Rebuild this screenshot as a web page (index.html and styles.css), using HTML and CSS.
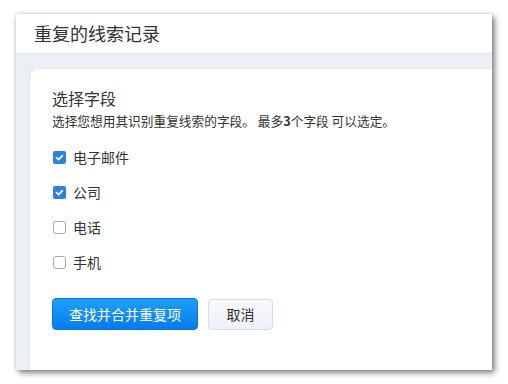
FILE: index.html
```html
<!DOCTYPE html>
<html lang="zh">
<head>
<meta charset="utf-8">
<link rel="stylesheet" href="styles.css">
</head>
<body>
<div class="window">
  <div class="header">重复的线索记录</div>
  <div class="body">
    <div class="card">
      <div class="section-title">选择字段</div>
      <div class="desc">选择您想用其识别重复线索的字段。 最多<b>3</b>个字段 可以选定。</div>
      <div class="options">
        <label class="opt"><span class="cb checked"><svg viewBox="0 0 13 13" width="13" height="13"><path d="M3.6 6.7 L5.6 8.6 L9.4 4.6" fill="none" stroke="#fff" stroke-width="1.8" stroke-linecap="round" stroke-linejoin="round"/></svg></span>电子邮件</label>
        <label class="opt"><span class="cb checked"><svg viewBox="0 0 13 13" width="13" height="13"><path d="M3.6 6.7 L5.6 8.6 L9.4 4.6" fill="none" stroke="#fff" stroke-width="1.8" stroke-linecap="round" stroke-linejoin="round"/></svg></span>公司</label>
        <label class="opt"><span class="cb"></span>电话</label>
        <label class="opt"><span class="cb"></span>手机</label>
      </div>
      <div class="actions">
        <button class="btn primary">查找并合并重复项</button>
        <button class="btn secondary">取消</button>
      </div>
    </div>
  </div>
</div>
</body>
</html>
```
FILE: styles.css
```css
* { box-sizing: border-box; }
html, body { margin: 0; padding: 0; background: #fff; }
body {
  font-family: "Noto Sans CJK SC", "Noto Sans", "Liberation Sans", sans-serif;
  color: #333;
  padding: 14px 16px 14px 16px;
}
.window {
  width: 476px;
  height: 356px;
  background: #eceff4;
  box-shadow: 3px 3px 6px rgba(0,0,0,0.45), 0 0 4px rgba(0,0,0,0.2);
  display: flex;
  flex-direction: column;
  overflow: hidden;
}
.header {
  height: 40px;
  background: #fff;
  border-bottom: 1px solid #e2e6ee;
  padding-left: 18px;
  font-size: 18px;
  line-height: 38px;
  color: #333;
}
.body {
  flex: 1;
  padding: 14px 0 0 13px;
  display: flex;
}
.card {
  flex: 1;
  background: #fff;
  border-top: 1px solid #e2e6ee;
  border-left: 1px solid #e2e6ee;
  border-top-left-radius: 9px;
  padding: 18px 0 0 22px;
}
.section-title {
  font-size: 16px;
  line-height: 22px;
  color: #333;
}
.desc {
  font-size: 12.7px;
  line-height: 18px;
  margin-top: 3px;
  color: #333;
}
.desc b { font-weight: 700; }
.options {
  margin-top: 17px;
  display: flex;
  flex-direction: column;
  gap: 15px;
}
.opt {
  display: flex;
  align-items: center;
  height: 20px;
  font-size: 14px;
  color: #333;
}
.cb {
  width: 13px;
  height: 13px;
  margin-left: 1px;
  margin-right: 7px;
  border: 1px solid #a9a9ad;
  border-radius: 3px;
  background: #fff;
  display: flex;
  align-items: center;
  justify-content: center;
}
.cb.checked {
  border: none;
  background: #2f7fe6;
  border-radius: 2px;
}
.cb svg { display: block; }
.actions {
  margin-top: 26px;
  display: flex;
  align-items: center;
  gap: 10px;
}
.btn {
  font-family: inherit;
  font-size: 14px;
  height: 32px;
  border-radius: 4px;
  padding: 0;
  cursor: pointer;
}
.primary {
  width: 146px;
  color: #fff;
  border: 1px solid #0a74e0;
  background: linear-gradient(#1da1f7, #077bee);
}
.secondary {
  width: 65px;
  height: 31px;
  color: #333;
  border: 1px solid #d6dce8;
  background: linear-gradient(#f8f9fc, #eef1f6);
}
```
